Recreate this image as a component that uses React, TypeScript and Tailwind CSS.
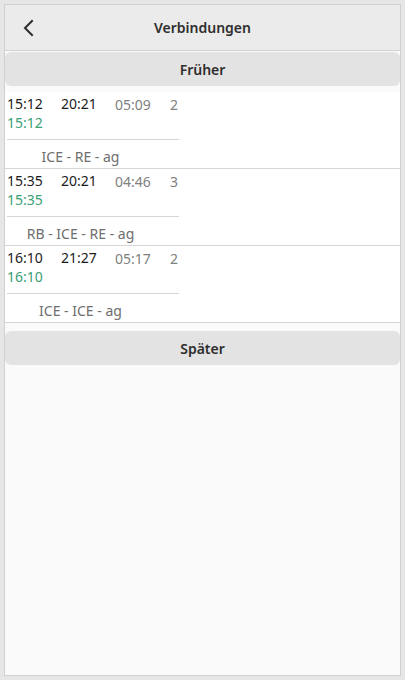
import React from 'react';

interface Connection {
    dep: string;
    arr: string;
    duration: string;
    changes: string;
    actual: string;
    trains: string;
}

const connections: Connection[] = [
    { dep: '15:12', arr: '20:21', duration: '05:09', changes: '2', actual: '15:12', trains: 'ICE - RE - ag' },
    { dep: '15:35', arr: '20:21', duration: '04:46', changes: '3', actual: '15:35', trains: 'RB - ICE - RE - ag' },
    { dep: '16:10', arr: '21:27', duration: '05:17', changes: '2', actual: '16:10', trains: 'ICE - ICE - ag' },
];

const ConnectionRow: React.FC<{ c: Connection }> = ({ c }) => {
    return (
        <div className="border-b border-[#d6d6d6] bg-white pl-[2px]">
            <div className="inline-grid grid-cols-[54px_54px_55px_auto] pt-[3px]">
                <span className="text-[#1c1c1c] leading-[18px]">{c.dep}</span>
                <span className="text-[#1c1c1c] leading-[18px]">{c.arr}</span>
                <span className="text-[#808080] leading-[18px] pt-[1px]">{c.duration}</span>
                <span className="text-[#808080] leading-[18px] pt-[1px] pr-[1px]">{c.changes}</span>
                <span className="text-[#3aa075] leading-[18px] col-span-4">{c.actual}</span>
                <div className="col-span-4 h-[8px] border-b border-[#d6d6d6]" />
                <span className="col-span-3 text-center pr-[16px] text-[#6e6e6e] leading-[18px] pt-[8px] pb-[2px]">{c.trains}</span>
            </div>
        </div>
    );
};

export default function App() {
    return (
        <div className="w-[405px] h-[680px] bg-[#e6e6e6] p-[4px] text-[14px]" style={{ fontFamily: '"Noto Sans", "Open Sans", sans-serif' }}>
            <div className="h-full flex flex-col border border-[#d0d0d0] bg-[#fafafa]">
                <div className="h-[46px] flex items-center relative bg-[#ebebeb] border-b border-[#d2d2d2] shrink-0">
                    <svg className="absolute left-[16px] top-[14px]" width="16" height="18" viewBox="0 0 16 18" fill="none">
                        <path d="M11 2 L4 9 L11 16" stroke="#2e2e2e" strokeWidth="2" strokeLinecap="square" />
                    </svg>
                    <span className="w-full text-center font-semibold text-[#2e2e2e]">Verbindungen</span>
                </div>
                <button className="mt-[1px] h-[34px] rounded-[6px] bg-[#e3e3e3] font-semibold text-[#2e2e2e] shrink-0">Früher</button>
                <div className="mt-[6px]">
                    {connections.map((c) => (
                        <ConnectionRow key={c.dep} c={c} />
                    ))}
                </div>
                <button className="mt-[8px] h-[34px] rounded-[6px] bg-[#e3e3e3] font-semibold text-[#2e2e2e] shrink-0">Später</button>
            </div>
        </div>
    );
}
